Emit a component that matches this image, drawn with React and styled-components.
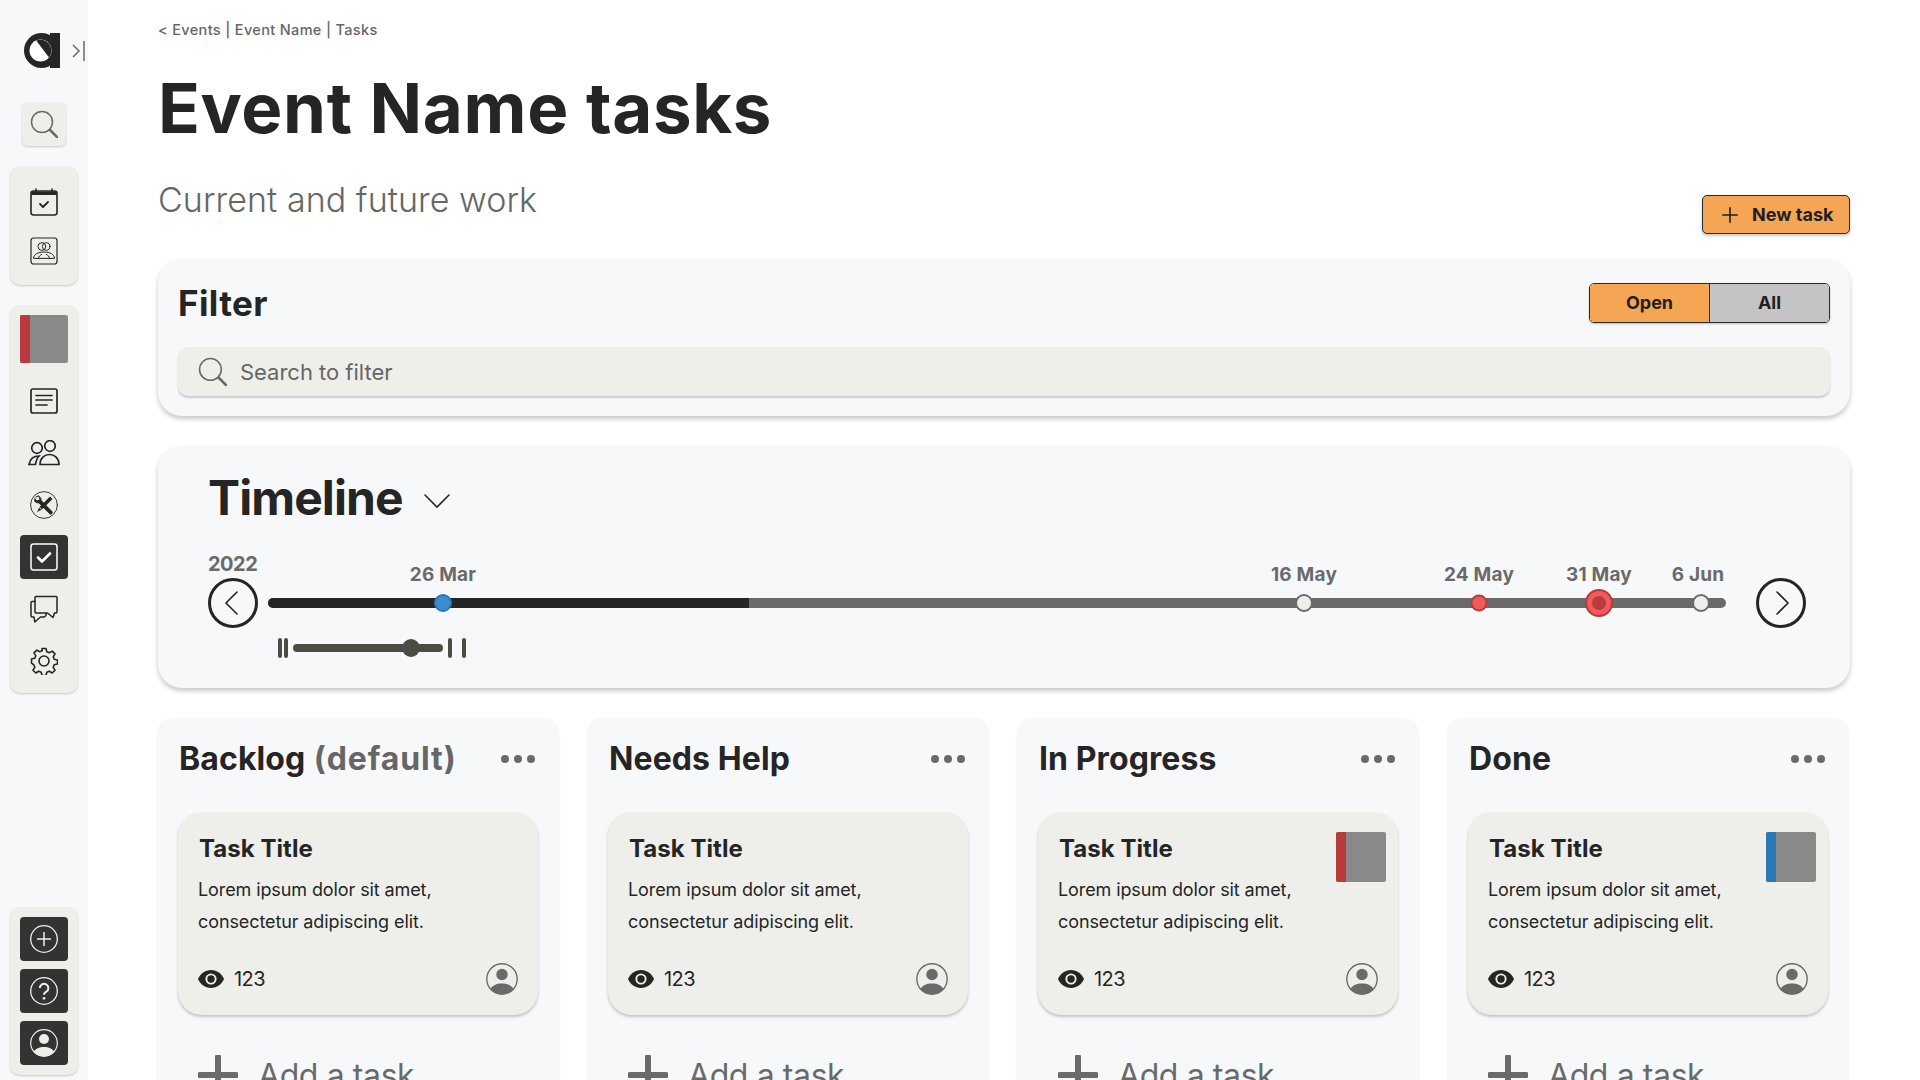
import React from "react";
import styled, { createGlobalStyle } from "styled-components";

const Global = createGlobalStyle`
  html, body { margin: 0; padding: 0; height: 100%; overflow: hidden; background: #fff; }
  #root { height: 100%; }
  * { box-sizing: border-box; }
  body { font-family: Inter, "Noto Sans", sans-serif; color: #252525; }
`;

const Shell = styled.div`display: flex; height: 100vh; overflow: hidden;`;
const Side = styled.aside`
  width: 88px; flex: none; background: #f7f8fa; display: flex; flex-direction: column; align-items: center; padding-top: 33px; height: 100%;
`;
const LogoRow = styled.div`
  width: 88px; height: 35px; padding-left: 24px; display: flex; align-items: center; gap: 12px; color: #6a6a6a;
`;
const SearchBtn = styled.div`
  width: 44px; height: 44px; margin-top: 34px; border-radius: 6px; background: #eeefea; box-shadow: 0 1px 2px rgba(0,0,0,.2);
  display: flex; align-items: center; justify-content: center;
`;
const SideGroup = styled.div`
  width: 68px; margin-top: ${p => p.$mt}px; margin-bottom: ${p => p.$mb || 0}px; padding: ${p => p.$pad}; background: #eeefea; border-radius: 10px; box-shadow: 0 1px 2px rgba(0,0,0,.2);
  display: flex; flex-direction: column; align-items: center; gap: ${p => p.$gap}px;
`;
const SideItem = styled.div`
  width: 48px; height: ${p => p.$h || 44}px; border-radius: 4px; display: flex; align-items: center; justify-content: center;
  background: ${p => p.$dark ? "#333333" : "transparent"};
`;
const SideThumb = styled.div`
  width: 48px; height: 48px; margin-bottom: 8px; flex: none; border-radius: 2px; overflow: hidden; display: flex; background: #8a8989;
  &::before { content: ""; width: 10px; background: #b93b3d; }
`;
const Spring = styled.div`flex: 1;`;

const Main = styled.main`flex: 1; min-width: 0; padding: 20px 70px 0; display: flex; flex-direction: column; height: 100%;`;
const Crumb = styled.div`font-size: 14.5px; line-height: 20px; color: #666; font-weight: 500; letter-spacing: .35px;`;
const Title = styled.h1`margin: 28px 0 0; font-size: 69px; line-height: 80px; font-weight: 700; letter-spacing: .65px; white-space: nowrap;`;
const HeadRow = styled.div`display: flex; justify-content: space-between; align-items: flex-end;`;
const Sub = styled.div`font-size: 34px; line-height: 44px; font-weight: 300; color: #666; margin: 30px 0 12px; letter-spacing: .06px;`;
const NewBtn = styled.button`
  width: 148px; height: 39px; border: 1.5px solid #2a2a2a; border-radius: 5px; background: #f4a655; color: #1f1f1f; box-shadow: 0 2px 3px rgba(0,0,0,.22);
  display: flex; align-items: center; gap: 14px; padding: 0 0 0 19px; font: 700 18px Inter, sans-serif;
`;
const Panel = styled.section`
  margin-top: ${p => p.$mt}px; background: #f7f8fa; border-radius: 24px; box-shadow: 0 3px 5px rgba(0,0,0,.22); padding: ${p => p.$pad};
`;
const FilterHead = styled.div`display: flex; justify-content: space-between; align-items: center; height: 40px; margin-bottom: 24px;`;
const H2 = styled.h2`margin: 0; font-size: 35px; line-height: 40px; font-weight: 700; letter-spacing: .4px;`;
const Toggle = styled.div`
  width: 241px; height: 40px; display: flex; border: 1.5px solid #2a2a2a; border-radius: 5px; overflow: hidden; box-shadow: 0 1px 2px rgba(0,0,0,.25);
`;
const ToggleOpt = styled.div`
  flex: 1; display: flex; align-items: center; justify-content: center; font-size: 18px; font-weight: 700; color: #1f1f1f; padding-bottom: 1px;
  background: ${p => p.$on ? "#f4a655" : "#c4c4c4"}; border-left: ${p => p.$on ? "none" : "1.5px solid #2a2a2a"};
`;
const SearchBox = styled.div`
  height: 49px; background: #eeefea; border-radius: 10px; box-shadow: 0 2px 2px rgba(0,0,0,.18); padding-left: 20px; display: flex; align-items: center; gap: 13px;
  font-size: 22px; color: #666; font-weight: 400; letter-spacing: -.02px;
`;
const TimeHead = styled.div`display: flex; align-items: center; height: 60px; gap: 21px;`;
const TimeTitle = styled.h2`margin: 0; font-size: 48px; line-height: 60px; font-weight: 700; letter-spacing: -.9px;`;
const TimeRow = styled.div`display: flex; align-items: center; margin-top: 50px; height: 50px;`;
const NavWrap = styled.div`position: relative; flex: none; margin: ${p => p.$m};`;
const Year = styled.span`position: absolute; left: 0; top: -24px; font-size: 20px; line-height: 20px; font-weight: 700; color: #6a6a6a; letter-spacing: -.5px;`;
const NavBtn = styled.div`width: 50px; height: 50px; border: 3px solid #252525; border-radius: 50%; display: flex; align-items: center; justify-content: center; background: transparent;`;
const Track = styled.div`position: relative; flex: 1; height: 10px; border-radius: 5px; background: #6a6a6a;`;
const TrackDone = styled.div`height: 100%; border-radius: 5px 0 0 5px; background: #252525;`;
const Marker = styled.div`
  position: absolute; top: 50%; width: ${p => p.$size}px; height: ${p => p.$size}px; transform: translate(-50%, -50%); border-radius: 50%;
  background: ${p => p.$fill}; border: 2px solid ${p => p.$line}; display: flex; align-items: center; justify-content: center;
  &::after { content: ""; display: ${p => p.$inner ? "block" : "none"}; width: 14px; height: 14px; border-radius: 50%; background: #b93b3d; }
`;
const MarkLabel = styled.span`
  position: absolute; top: -33px; transform: translateX(-50%); font-size: 19px; line-height: 20px; font-weight: 700; color: #6a6a6a; white-space: nowrap; letter-spacing: .2px;
`;
const Mini = styled.div`display: flex; align-items: center; height: 20px; margin: 10px 0 0 70px;`;
const MiniBar = styled.span`width: 4px; height: 20px; border-radius: 2px; background: #4d4c43; margin-left: ${p => p.$ml}px;`;
const MiniTrack = styled.div`position: relative; width: 150px; height: 8px; margin-left: 5px; border-radius: 4px; background: #4d4c43;`;
const MiniKnob = styled.span`position: absolute; left: 109px; top: -5px; width: 18px; height: 18px; border-radius: 50%; background: #4d4c43;`;

const Board = styled.div`flex: 1; min-height: 0; width: 1690px; margin-top: 30px; display: grid; grid-template-columns: repeat(4, 400px); gap: 30px;`;
const Col = styled.div`background: #f7f8fa; border-radius: 14px 14px 0 0; padding: 21px 20px 0; box-shadow: 0 2px 3px rgba(0,0,0,.1); overflow: hidden;`;
const ColHead = styled.div`display: flex; justify-content: space-between; align-items: center; height: 40px; padding: 0 3px 0 1px; margin-bottom: 33px;`;
const ColTitle = styled.h3`margin: 0; font-size: 32px; line-height: 40px; font-weight: 700; letter-spacing: .1px; white-space: nowrap;`;
const Muted = styled.span`color: #666; letter-spacing: .9px;`;
const Dots = styled.div`display: flex; gap: 5px; span { width: 8px; height: 8px; border-radius: 50%; background: #6a6a6a; }`;
const Task = styled.article`
  position: relative; height: 203px; background: #eeefea; border-radius: 24px; padding: 22px 20px 0 20px; box-shadow: 0 2px 3px rgba(0,0,0,.22);
`;
const TaskTitle = styled.div`font-size: 24px; line-height: 30px; font-weight: 700; letter-spacing: .05px; padding-left: 1px;`;
const TaskText = styled.p`margin: 10px 0 0; font-size: 18px; line-height: 32px; font-weight: 400; letter-spacing: -.1px;`;
const TaskFoot = styled.div`display: flex; align-items: center; height: 32px; margin-top: 25px;`;
const Count = styled.span`font-size: 20px; margin-left: 10px; letter-spacing: -.6px; flex: 1;`;
const Thumb = styled.div`
  position: absolute; top: 20px; right: 12px; width: 50px; height: 50px; border-radius: 2px; overflow: hidden; display: flex; background: #8a8989;
  &::before { content: ""; width: 10px; background: ${p => p.$c}; }
`;
const AddRow = styled.div`display: flex; align-items: center; gap: 20px; height: 40px; margin-top: 40px; font-size: 32px; color: #6a6a6a; padding-left: 20px; letter-spacing: -.4px; white-space: nowrap;`;

const Svg = ({ s = 28, children, ...r }) => (
  <svg width={s} height={s} viewBox="0 0 28 28" fill="none" stroke="currentColor" strokeLinecap="round" strokeLinejoin="round" {...r}>{children}</svg>
);

const Logo = () => (
  <svg width="36" height="35" viewBox="0 0 36 35">
    <circle cx="17.500" cy="17.500" r="17.500" fill="#252525" />
    <rect x="26" y="0" width="10" height="35" fill="#252525" />
    <circle cx="16.500" cy="17.500" r="11" fill="#fff" />
    <path d="M12.200 7.500A11 11 0 0 1 25 24.500Z" fill="#252525" />
  </svg>
);
const Collapse = () => (
  <svg width="13" height="20" viewBox="0 0 13 20" fill="none" stroke="#6a6a6a" strokeWidth="1.500"><path d="M1 4l6 6-6 6" /><path d="M12 0v20" /></svg>
);
const SearchIcon = ({ s = 28 }) => (
  <svg width={s} height={s} viewBox="0 0 28 28" fill="none" stroke="#6a6a6a"><circle cx="12" cy="12" r="10.500" strokeWidth="1.500" /><path d="M20 20l7 7" strokeWidth="2.500" strokeLinecap="round" /></svg>
);
const CalIcon = () => (
  <Svg style={{ color: "#252525" }}>
    <rect x="1" y="3" width="26" height="24" rx="2.500" strokeWidth="1.600" />
    <path d="M1.500 6a2.500 2.500 0 0 1 2.500-2.500h20a2.500 2.500 0 0 1 2.500 2.500v1h-25z" fill="currentColor" stroke="none" />
    <path d="M6 1v3M22 1v3" strokeWidth="1.500" />
    <path d="M10 16l3 3 5-5" strokeWidth="1.800" />
  </Svg>
);
const ContactIcon = () => (
  <Svg>
    <rect x="1" y="1" width="26" height="26" rx="2.500" strokeWidth="1.200" />
    <circle cx="11.800" cy="9.500" r="3.800" strokeWidth="1" /><circle cx="16.200" cy="9.500" r="3.800" strokeWidth="1" />
    <path d="M3.500 21c0-3.500 4.500-6 10.500-6s10.500 2.500 10.500 6zM8.500 21c.3-1.500 1.500-3 3-3.500M19.500 21c-.3-1.500-1.500-3-3-3.500" strokeWidth="1" />
  </Svg>
);
const NotesIcon = () => (
  <Svg><rect x="1" y="2" width="26" height="24" rx="2" strokeWidth="1.700" /><path d="M6 8.500h16M6 13h16M6 18h11" strokeWidth="1.700" /></Svg>
);
const PeopleIcon = () => (
  <svg width="32" height="26" viewBox="0 0 32 26" fill="none" stroke="#252525" strokeWidth="1.700">
    <circle cx="9" cy="8" r="5.300" /><circle cx="22" cy="6" r="5.300" />
    <path d="M11 16c-5 0-9 3-10 8.500 H7.500C8 21 9 18 11 16Z" /><path d="M12 24.500C12 18 16.500 14.500 21.500 14.500s9.500 3.500 9.500 10z" />
  </svg>
);
const ToolsIcon = () => (
  <Svg>
    <circle cx="14" cy="14" r="13.400" strokeWidth=".9" />
    <path d="M20 5.500l2.500 2.500L12 18.500l-5 2.500 2.500-5z" fill="#252525" stroke="none" />
    <path d="M9.500 16.300l2.300 2.300" stroke="#eeefea" strokeWidth="1" />
    <path d="M8.500 4.800a4.300 4.300 0 0 0-3.700 5.700l1.800 1.200 2.200.2 11 11c1 1 3.500-1 2.300-2.300L11.300 9.600l-.4-2.200z" fill="#252525" stroke="#252525" strokeWidth=".7" />
    <path d="M4.800 7l2.200 2.500 2.500-1-1-3" fill="#eeefea" stroke="none" />
  </Svg>
);
const CheckIcon = () => (
  <Svg style={{ color: "#fff" }}><rect x="1" y="1" width="26" height="26" rx="2.500" strokeWidth="1.500" /><path d="M8 14.500l4 4 8-8" strokeWidth="2.600" /></Svg>
);
const ChatIcon = () => (
  <Svg strokeWidth="1.500">
    <path d="M6 1.500h20a1 1 0 0 1 1 1V17a1 1 0 0 1-1 1h-1.500L23 22.500 17.500 18H6a1 1 0 0 1-1-1V2.500a1 1 0 0 1 1-1Z" fill="#eeefea" />
    <path d="M5 6.500H2a1 1 0 0 0-1 1V21a1 1 0 0 0 1 1h2l.8 5 5.700-5H14a3 3 0 0 0 2-3.800" fill="none" />
  </Svg>
);
const GearIcon = () => (
  <Svg strokeWidth="1.600">
    <circle cx="14" cy="14" r="5" />
    <path d="M12 1.500h4l.8 3.300 2.500 1 2.900-1.700 2.800 2.800-1.800 2.900 1 2.500 3.300.7v4l-3.300.8-1 2.500 1.800 2.900-2.800 2.800-2.900-1.800-2.500 1-.8 3.300h-4l-.8-3.300-2.500-1-2.900 1.800-2.800-2.800 1.800-2.900-1-2.500L1.500 16v-4l3.300-.7 1-2.500L4 5.900l2.800-2.800 2.900 1.700 2.500-1z" />
  </Svg>
);
const PlusCircle = () => (
  <Svg style={{ color: "#eeefea" }}><circle cx="14" cy="14" r="13.300" strokeWidth="1.300" /><path d="M14 7v14M7 14h14" strokeWidth="1.500" strokeLinecap="butt" /></Svg>
);
const HelpIcon = () => (
  <Svg style={{ color: "#eeefea" }}>
    <circle cx="14" cy="14" r="13.300" strokeWidth="1.300" />
    <path d="M9.800 11a4.300 4.300 0 1 1 6.500 3.700c-1.500.9-2.300 1.500-2.300 3" strokeWidth="2" strokeLinecap="butt" />
    <circle cx="14" cy="21.300" r="1.400" fill="currentColor" stroke="none" />
  </Svg>
);
const UserIcon = ({ s = 28, c = "#eeefea" }) => (
  <svg width={s} height={s} viewBox="0 0 28 28">
    <circle cx="14" cy="14" r="13.300" fill="none" stroke={c} strokeWidth="1.200" />
    <circle cx="14" cy="10" r="5" fill={c} />
    <path d="M3.800 23c1.500-3.300 5.500-5 10.200-5s8.700 1.700 10.200 5A13 13 0 0 1 14 27.300 13 13 0 0 1 3.800 23Z" fill={c} />
  </svg>
);
const Chevron = ({ d, s = 26 }) => (
  <svg width={s} height={s} viewBox="0 0 26 26" fill="none" stroke="#252525" strokeWidth="1.600" strokeLinecap="round"><path d={d} /></svg>
);
const Plus = ({ s, w, c }) => (
  <svg width={s} height={s} viewBox="0 0 40 40" stroke={c} strokeWidth={w} strokeLinecap="round" style={{ flex: "none" }}><path d="M20 2v36M2 20h36" /></svg>
);
const Eye = () => (
  <svg width="26" height="18" viewBox="0 0 26 18" style={{ flex: "none" }}><path d="M13 0C7 0 2.500 3.600 0 9c2.500 5.400 7 9 13 9s10.500-3.600 13-9C23.500 3.600 19 0 13 0Z" fill="#252525" /><circle cx="13" cy="9" r="5.600" fill="#eeefea" /><circle cx="13" cy="9" r="3.700" fill="#252525" /></svg>
);

const markers = [
  { at: 175, size: 18, fill: "#3a8fd0", line: "#2a78b4", label: "26 Mar" },
  { at: 1036, size: 18, fill: "#eeefea", line: "#6a6a6a", label: "16 May" },
  { at: 1211, size: 17, fill: "#ef5a5a", line: "#b93b3d", label: "24 May" },
  { at: 1331, size: 28, fill: "#ef5a5a", line: "#b93b3d", label: "31 May", inner: true },
  { at: 1433, size: 18, fill: "#eeefea", line: "#6a6a6a", label: "6 Jun", shift: -3 },
];
const columns = [
  { name: "Backlog", extra: "(default)" },
  { name: "Needs Help" },
  { name: "In Progress", thumb: "#b93b3d" },
  { name: "Done", thumb: "#2a78b4" },
];

export default function App() {
  return (
    <Shell>
      <Global />
      <Side>
        <LogoRow><Logo /><Collapse /></LogoRow>
        <SearchBtn><SearchIcon /></SearchBtn>
        <SideGroup $mt={20} $pad="14px 0 12px" $gap={5}>
          <SideItem><CalIcon /></SideItem>
          <SideItem><ContactIcon /></SideItem>
        </SideGroup>
        <SideGroup $mt={20} $pad="10px 0 10px" $gap={8}>
          <SideThumb />
          <SideItem><NotesIcon /></SideItem>
          <SideItem><PeopleIcon /></SideItem>
          <SideItem><ToolsIcon /></SideItem>
          <SideItem $dark><CheckIcon /></SideItem>
          <SideItem><ChatIcon /></SideItem>
          <SideItem><GearIcon /></SideItem>
        </SideGroup>
        <Spring />
        <SideGroup $mt={0} $mb={5} $pad="10px 0" $gap={8}>
          <SideItem $dark><PlusCircle /></SideItem>
          <SideItem $dark><HelpIcon /></SideItem>
          <SideItem $dark><UserIcon /></SideItem>
        </SideGroup>
      </Side>
      <Main>
        <Crumb>&lt; Events | Event Name | Tasks</Crumb>
        <Title>Event Name tasks</Title>
        <HeadRow>
          <Sub>Current and future work</Sub>
          <NewBtn><Plus s={16} w={4} c="#1f1f1f" />New task</NewBtn>
        </HeadRow>
        <Panel $mt={25} $pad="24px 20px 20px">
          <FilterHead>
            <H2>Filter</H2>
            <Toggle><ToggleOpt $on>Open</ToggleOpt><ToggleOpt>All</ToggleOpt></Toggle>
          </FilterHead>
          <SearchBox><SearchIcon s={29} />Search to filter</SearchBox>
        </Panel>
        <Panel $mt={30} $pad="22px 44px 30px 50px">
          <TimeHead>
            <TimeTitle>Timeline</TimeTitle>
            <Chevron d="M1 10l12 12L25 10" s={26} />
          </TimeHead>
          <TimeRow>
            <NavWrap $m="0 10px 0 0">
              <Year>2022</Year>
              <NavBtn><Chevron d="M17 2L6 13l11 11" /></NavBtn>
            </NavWrap>
            <Track>
              <TrackDone style={{ width: 481 }} />
              {markers.map(m => (
                <React.Fragment key={m.label}>
                  <MarkLabel style={{ left: m.at + (m.shift || 0) }}>{m.label}</MarkLabel>
                  <Marker style={{ left: m.at }} $size={m.size} $fill={m.fill} $line={m.line} $inner={m.inner} />
                </React.Fragment>
              ))}
            </Track>
            <NavWrap $m="0 0 0 30px">
              <NavBtn><Chevron d="M9 2l11 11L9 24" /></NavBtn>
            </NavWrap>
          </TimeRow>
          <Mini>
            <MiniBar $ml={0} /><MiniBar $ml={2} />
            <MiniTrack><MiniKnob /></MiniTrack>
            <MiniBar $ml={5} /><MiniBar $ml={10} />
          </Mini>
        </Panel>
        <Board>
          {columns.map(c => (
            <Col key={c.name}>
              <ColHead>
                <ColTitle>{c.name}{c.extra && <Muted> {c.extra}</Muted>}</ColTitle>
                <Dots><span /><span /><span /></Dots>
              </ColHead>
              <Task>
                {c.thumb && <Thumb $c={c.thumb} />}
                <TaskTitle>Task Title</TaskTitle>
                <TaskText>Lorem ipsum dolor sit amet,<br />consectetur adipiscing elit.</TaskText>
                <TaskFoot><Eye /><Count>123</Count><UserIcon s={32} c="#6a6a6a" /></TaskFoot>
              </Task>
              <AddRow><Plus s={40} w={6} c="#6a6a6a" />Add a task</AddRow>
            </Col>
          ))}
        </Board>
      </Main>
    </Shell>
  );
}
